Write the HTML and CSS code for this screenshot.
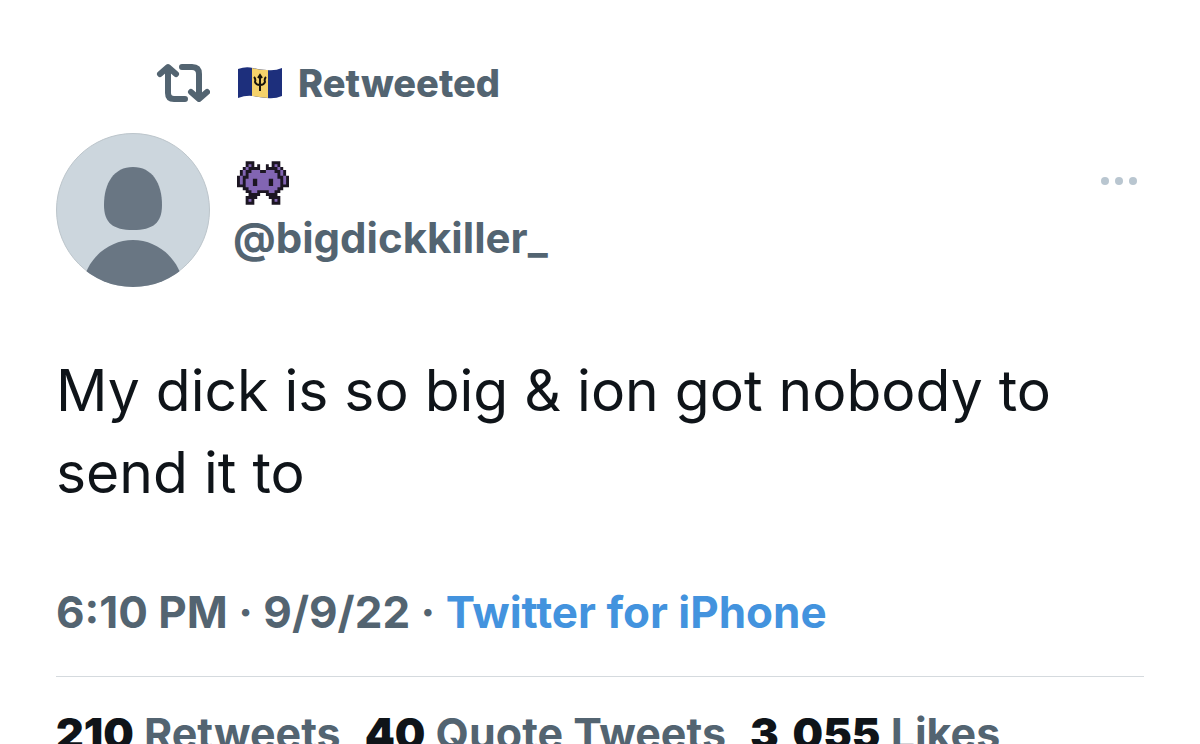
FILE: index.html
```
<!DOCTYPE html>
<html lang="en">
<head>
  <meta charset="UTF-8" />
  <meta name="viewport" content="width=device-width, initial-scale=1.0"/>
  <title>Tweet</title>
  <link rel="stylesheet" href="styles.css">
</head>
<body>

  <article class="tweet">
    <div class="retweeted">
      <svg class="retweet-icon" viewBox="0 0 54 40" aria-hidden="true">
        <path d="M4 11 12 4 20 11M12 5V30Q12 36 18 36H29M26 4H36Q43 4 43 11V35M35 29 43 36 51 29"/>
      </svg>
      <svg class="flag" viewBox="0 0 44 32" role="img" aria-label="Barbados">
        <path fill="#1d2f7c" d="M0 2Q8-1 15 1Q22 3 29 3Q37 4 44 1V29Q37 32 29 31Q22 30 15 29Q8 28 0 31Z"/>
        <path fill="#f5d26b" d="M14 1Q22 3 30 3V31Q22 30 14 29Z"/>
        <path fill="none" stroke="#17130b" stroke-width="2" d="M22 8V24M16 10Q18 12 17 15Q18 18 22 18Q26 18 27 15Q26 12 28 10M20 11 22 8 24 11"/>
      </svg>
      <span>Retweeted</span>
    </div>

    <header class="author">
      <svg class="avatar" viewBox="0 0 154 154" role="img" aria-label="Profile picture">
        <clipPath id="circle"><circle cx="77" cy="77" r="77"/></clipPath>
        <circle cx="77" cy="77" r="76.5" fill="#ccd6dd" stroke="#bcc5cb"/>
        <g fill="#697683" clip-path="url(#circle)">
          <path d="M77 34C96 34 106 50 106 72C106 90 97 97 77 97C57 97 48 90 48 72C48 50 58 34 77 34Z"/>
          <path d="M26 154C30 125 53 107 77 107C101 107 124 125 128 154Z"/>
        </g>
      </svg>
      <div class="names">
        <svg class="alien" viewBox="0 0 18 15" role="img" aria-label="Alien monster">
          <path fill="#1c1622" d="M3 0h3v2h1v-1h1v2h2v-2h1v1h1v-2h3v2h1v1h1v2h1v4h-2v1h-1v1h-1v1h1v3h-3v-2h-1v-1h-1v-1h-2v1h-1v1h-1v2h-3v-3h1v-1h-1v-1h-1v-1h-2v-4h1v-2h1v-1h1z"/>
          <path fill="#8265b3" d="M4 1h1v1h-1zM13 1h1v1h-1zM3 2h1v1h-1zM14 2h1v1h-1zM2 3h1v1h-1zM15 3h1v1h-1zM2 4h1v1h-1zM15 4h1v1h-1zM1 5h1v3h-1zM16 5h1v3h-1zM4 13h1v1h-1zM13 13h1v1h-1z"/>
          <path fill="#8265b3" d="M5 3h3v1h2v-1h3v1h1v2h1v3h-1v1h-1v1h-2v-1h-4v1h-2v-1h-1v-1h-1v-3h1v-2h1z"/>
          <path fill="#1c1622" d="M5.500 6h1.500v2.500h-1.500zM11 6h1.500v2.500h-1.500z"/>
        </svg>
        <a class="handle" href="#">@bigdickkiller_</a>
      </div>
      <button class="more" aria-label="More">
        <svg viewBox="0 0 38 10" aria-hidden="true">
          <circle cx="5" cy="5" r="4"/><circle cx="19" cy="5" r="4"/><circle cx="33" cy="5" r="4"/>
        </svg>
      </button>
    </header>

    <p class="tweet-text">My dick is so big &amp; ion got nobody to send it to</p>

    <div class="meta">6:10 PM · 9/9/22 · <a href="#">Twitter for iPhone</a></div>

    <div class="stats">
      <span><strong>210</strong> Retweets</span>
      <span><strong>40</strong> Quote Tweets</span>
      <span><strong>3,055</strong> Likes</span>
    </div>
  </article>

</body>
</html>
```
FILE: styles.css
```
* {
  box-sizing: border-box;
}

body {
  margin: 0;
  height: 100vh;
  overflow: hidden;
  background: #fff;
  color: #0f1419;
  font-family: Inter, "Liberation Sans", sans-serif;
}

a {
  text-decoration: none;
}

.tweet {
  padding: 60px 56px;
}

.retweeted {
  display: flex;
  align-items: center;
  padding-left: 100px;
  color: #536471;
  font-size: 38px;
  font-weight: 800;
  line-height: 46px;
}

.retweet-icon {
  width: 54px;
  height: 40px;
  margin-right: 28px;
  fill: none;
  stroke: #536471;
  stroke-width: 6;
  stroke-linecap: round;
  stroke-linejoin: round;
}

.flag {
  width: 44px;
  height: 32px;
  margin-right: 16px;
}

/* Author */
.author {
  display: flex;
  align-items: flex-start;
  margin-top: 27px;
}

.avatar {
  width: 154px;
  height: 154px;
  margin-right: 23px;
}

.names {
  flex: 1;
  padding-top: 28px;
}

.alien {
  display: block;
  width: 52px;
  height: 44px;
  margin-left: 4px;
}

.handle {
  display: block;
  margin-top: 8px;
  color: #536471;
  font-size: 42px;
  font-weight: 700;
  line-height: 50px;
}

.more {
  margin-top: 40px;
  padding: 0 6px 0 0;
  border: none;
  background: none;
  cursor: pointer;
}

.more svg {
  display: block;
  width: 38px;
  height: 16px;
  fill: #b9c6d0;
}

.tweet-text {
  margin: 63px 0 0;
  font-size: 57px;
  line-height: 82px;
}

.meta {
  padding: 69px 0 35px;
  border-bottom: 1px solid #d5dade;
  color: #536471;
  font-size: 44px;
  font-weight: 700;
  line-height: 58px;
}

.meta a {
  color: #4393de;
}

.stats {
  display: flex;
  gap: 24px;
  padding-top: 30px;
  color: #536471;
  font-size: 43px;
  font-weight: 700;
  line-height: 52px;
  white-space: nowrap;
}

.stats strong {
  color: #0f1419;
  font-weight: 900;
}
```
